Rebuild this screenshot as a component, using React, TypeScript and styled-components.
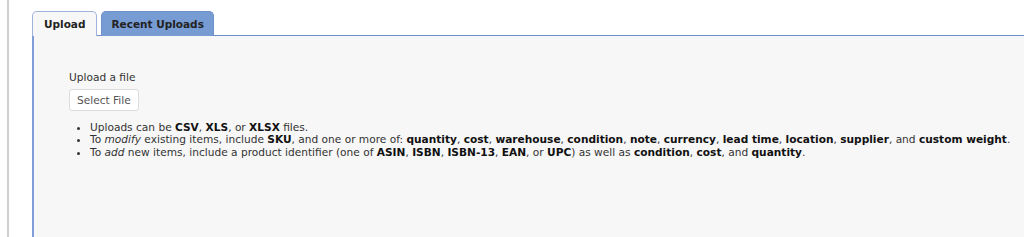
import React from "react"
import styled, { createGlobalStyle } from "styled-components"

const GlobalStyle = createGlobalStyle`
  html, body {
    margin: 0;
    padding: 0;
    background: #ffffff;
    font-family: "DejaVu Sans", Verdana, sans-serif;
    font-size: 10.6px;
    color: #333;
  }
`

const Page = styled.div`
  padding-left: 7px;
  height: 237px;
  overflow: hidden;
`

const Frame = styled.div`
  border-left: 2px solid #cfcfcf;
  padding-left: 23px;
  padding-top: 11px;
  height: 100%;
  box-sizing: border-box;
`

const TabBar = styled.div`
  display: flex;
  gap: 4px;
  position: relative;
  z-index: 1;
  margin-bottom: -1px;
`

const Tab = styled.div<{ $active?: boolean }>`
  height: 25px;
  box-sizing: border-box;
  display: flex;
  align-items: center;
  padding: 0 ${(p) => (p.$active ? "11px" : "9px")};
  font-weight: bold;
  font-size: 10.5px;
  color: #222;
  border: 1px solid ${(p) => (p.$active ? "#9fb4dc" : "#6f91cc")};
  border-bottom: none;
  border-top-left-radius: 5px;
  border-top-right-radius: 5px;
  background: ${(p) => (p.$active ? "#f7f7f7" : "#779bd3")};
`

const Panel = styled.div`
  border-top: 1px solid #6f8fcb;
  border-left: 2px solid #7f9dd6;
  background: #f7f7f7;
  padding: 35px 0 0 35px;
  height: 300px;
`

const Label = styled.div`
  color: #333;
  line-height: 13px;
`

const Button = styled.button`
  margin-top: 5px;
  height: 22px;
  padding: 0 7px;
  font-family: inherit;
  font-size: 10.6px;
  color: #555;
  background: #ffffff;
  border: 1px solid #dcdcdc;
  border-radius: 3px;
`

const Notes = styled.ul`
  margin: 10px 0 0;
  padding-left: 21px;
  color: #333;

  li {
    line-height: 12px;
    height: 12.4px;
  }

  b {
    color: #111;
  }
`

const App = () => {
  return (
    <>
      <GlobalStyle />
      <Page>
        <Frame>
          <TabBar>
            <Tab $active>Upload</Tab>
            <Tab>Recent Uploads</Tab>
          </TabBar>
          <Panel>
            <Label>Upload a file</Label>
            <Button>Select File</Button>
            <Notes>
              <li>
                Uploads can be <b>CSV</b>, <b>XLS</b>, or <b>XLSX</b> files.
              </li>
              <li>
                To <i>modify</i> existing items, include <b>SKU</b>, and one or more of: <b>quantity</b>, <b>cost</b>,{" "}
                <b>warehouse</b>, <b>condition</b>, <b>note</b>, <b>currency</b>, <b>lead time</b>, <b>location</b>,{" "}
                <b>supplier</b>, and <b>custom weight</b>.
              </li>
              <li>
                To <i>add</i> new items, include a product identifier (one of <b>ASIN</b>, <b>ISBN</b>, <b>ISBN-13</b>,{" "}
                <b>EAN</b>, or <b>UPC</b>) as well as <b>condition</b>, <b>cost</b>, and <b>quantity</b>.
              </li>
            </Notes>
          </Panel>
        </Frame>
      </Page>
    </>
  )
}

export default App
